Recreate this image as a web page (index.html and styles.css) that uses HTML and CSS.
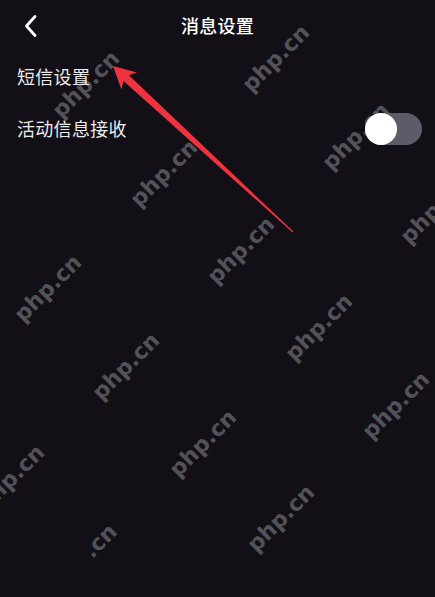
FILE: index.html
```html
<!DOCTYPE html>
<html lang="zh-CN">
<head>
<meta charset="utf-8">
<title>消息设置</title>
<link rel="stylesheet" href="styles.css">
</head>
<body>
<div class="page">
  <div class="watermarks" aria-hidden="true">
    <span class="wm" style="left:-58px;top:212px">php.cn</span>
    <span class="wm" style="left:254px;top:74px">php.cn</span>
    <span class="wm" style="left:64px;top:100px">php.cn</span>
    <span class="wm" style="left:142px;top:189px">php.cn</span>
    <span class="wm" style="left:334px;top:152px">php.cn</span>
    <span class="wm" style="left:412px;top:226px">php.cn</span>
    <span class="wm" style="left:219px;top:266px">php.cn</span>
    <span class="wm" style="left:26px;top:304px">php.cn</span>
    <span class="wm" style="left:297px;top:343px">php.cn</span>
    <span class="wm" style="left:104px;top:382px">php.cn</span>
    <span class="wm" style="left:374px;top:421px">php.cn</span>
    <span class="wm" style="left:181px;top:459px">php.cn</span>
    <span class="wm" style="left:-11px;top:494px">php.cn</span>
    <span class="wm" style="left:259px;top:534px">php.cn</span>
    <span class="wm" style="left:95px;top:540px">.cn</span>
  </div>

  <header class="header">
    <div class="header-left">
      <svg class="back" width="14" height="24" viewBox="0 0 14 24" aria-hidden="true">
        <path d="M11 2.5 L2.5 12 L11 21.5" fill="none" stroke="#ffffff" stroke-width="2.8" stroke-linecap="round" stroke-linejoin="round"/>
      </svg>
    </div>
    <h1 class="title">消息设置</h1>
    <div class="header-right"></div>
  </header>

  <div class="list">
    <div class="row">
      <span class="label">短信设置</span>
    </div>
    <div class="row">
      <span class="label">活动信息接收</span>
      <span class="switch"><span class="knob"></span></span>
    </div>
  </div>

  <svg class="annotation" width="435" height="597" viewBox="0 0 435 597" aria-hidden="true">
    <polygon points="113,66 137,72.5 128.9,75.3 293.4,231.6 292.6,232.4 123.5,81.1 121.4,89.4" fill="#ee3340"/>
  </svg>
</div>
</body>
</html>
```

FILE: styles.css
```css
* {
  box-sizing: border-box;
}

html, body {
  margin: 0;
  padding: 0;
  background: #121016;
}

.page {
  position: relative;
  width: 435px;
  height: 597px;
  overflow: hidden;
  background: #121016;
  font-family: "Noto Sans CJK SC", "Noto Sans", sans-serif;
  color: #ffffff;
}

.watermarks {
  position: absolute;
  inset: 0;
  z-index: 0;
  pointer-events: none;
}

.wm {
  position: absolute;
  font-family: "DejaVu Sans", sans-serif;
  font-weight: bold;
  font-size: 22px;
  line-height: 22px;
  height: 22px;
  white-space: nowrap;
  color: #535258;
  transform-origin: 0 100%;
  transform: rotate(-45deg);
}

.header {
  position: relative;
  z-index: 1;
  height: 50px;
  display: grid;
  grid-template-columns: 1fr auto 1fr;
  align-items: center;
}

.header-left {
  display: flex;
  align-items: center;
  padding-left: 24px;
  padding-top: 1px;
}

.back {
  display: block;
}

.title {
  margin: 0;
  font-size: 18px;
  font-weight: 500;
  line-height: 24px;
  color: #ffffff;
  letter-spacing: 0.3px;
}

.list {
  position: relative;
  z-index: 1;
  display: flex;
  flex-direction: column;
}

.row {
  height: 52px;
  display: flex;
  align-items: center;
  justify-content: space-between;
  padding: 0 13px 0 17px;
}

.label {
  font-size: 18px;
  line-height: 24px;
  color: #ececec;
  letter-spacing: 0.3px;
}

.switch {
  width: 57px;
  height: 32px;
  border-radius: 16px;
  background: #5b5c68;
  display: flex;
  align-items: center;
  margin-top: 2px;
}

.knob {
  width: 32px;
  height: 32px;
  border-radius: 50%;
  background: #ffffff;
}

.annotation {
  position: absolute;
  left: 0;
  top: 0;
  z-index: 2;
  pointer-events: none;
}
```
